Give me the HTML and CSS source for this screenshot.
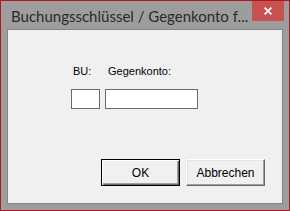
FILE: index.html
```html
<!DOCTYPE html>
<html lang="de">
<head>
<meta charset="utf-8">
<title>Buchungsschlüssel / Gegenkonto</title>
<link rel="stylesheet" href="styles.css">
</head>
<body>
<div class="window">
  <div class="titlebar">
    <span class="title">Buchungsschlüssel / Gegenkonto f...</span>
    <div class="close" aria-label="Schließen">
      <svg width="8" height="8" viewBox="0 0 8 8"><path d="M0.6 0.6 L7.4 7.4 M7.4 0.6 L0.6 7.4" stroke="#fff" stroke-width="1.8" fill="none"/></svg>
    </div>
  </div>
  <div class="client">
    <div class="fields">
      <span class="label label-bu">BU:</span>
      <span class="label label-gk">Gegenkonto:</span>
      <input class="input" type="text">
      <input class="input" type="text">
    </div>
    <div class="buttons">
      <button class="btn default">OK</button>
      <button class="btn">Abbrechen</button>
    </div>
  </div>
</div>
</body>
</html>
```
FILE: styles.css
```css
html, body {
  margin: 0;
  padding: 0;
}
body {
  width: 290px;
  height: 211px;
  overflow: hidden;
  font-family: "Liberation Sans", Arial, sans-serif;
  font-size: 11px;
}
.window {
  box-sizing: border-box;
  width: 290px;
  height: 211px;
  border: 1px solid #b5161f;
  background: #9d9d9d;
  padding: 0 6px 6px 6px;
  display: flex;
  flex-direction: column;
}
.titlebar {
  height: 28px;
  display: flex;
  align-items: flex-start;
  margin: 0 -6px;
  padding-left: 10px;
  padding-right: 5px;
}
.title {
  flex: 1;
  font-family: Lato, "Noto Sans", sans-serif;
  font-size: 15px;
  line-height: 20px;
  padding-top: 5px;
  color: #2a2a2a;
  white-space: nowrap;
}
.close {
  width: 32px;
  height: 20px;
  background: #c75050;
  display: flex;
  align-items: center;
  justify-content: center;
}
.client {
  flex: 1;
  background: #f0f0f0;
  border: 1px solid #858585;
  display: flex;
  flex-direction: column;
  padding: 35px 17px 17px 63px;
}
.fields {
  display: grid;
  grid-template-columns: 29px 93px;
  column-gap: 5px;
  row-gap: 11px;
  align-self: flex-start;
}
.label {
  line-height: 13px;
  color: #000;
}
.label-bu { padding-left: 2px; }
.label-gk { padding-left: 3px; }
.input {
  box-sizing: border-box;
  height: 20px;
  margin: 0;
  padding: 0;
  border: 1px solid #6a6a6a;
  background: #fff;
  width: 100%;
}
.buttons {
  margin-top: auto;
  display: flex;
  justify-content: flex-end;
  gap: 6px;
}
.btn {
  box-sizing: border-box;
  width: 79px;
  height: 27px;
  margin: 0;
  padding: 0;
  font-family: "Liberation Sans", Arial, sans-serif;
  font-size: 12px;
  color: #000;
  background: #f0f0f0;
  border: 1px solid;
  border-color: #ffffff #696969 #696969 #ffffff;
  box-shadow: inset -1px -1px #a0a0a0, inset 1px 1px #e3e3e3;
}
.btn.default {
  border-color: #000;
  box-shadow: inset 1px 1px #ffffff, inset -1px -1px #696969, inset -2px -2px #a0a0a0;
}
```
